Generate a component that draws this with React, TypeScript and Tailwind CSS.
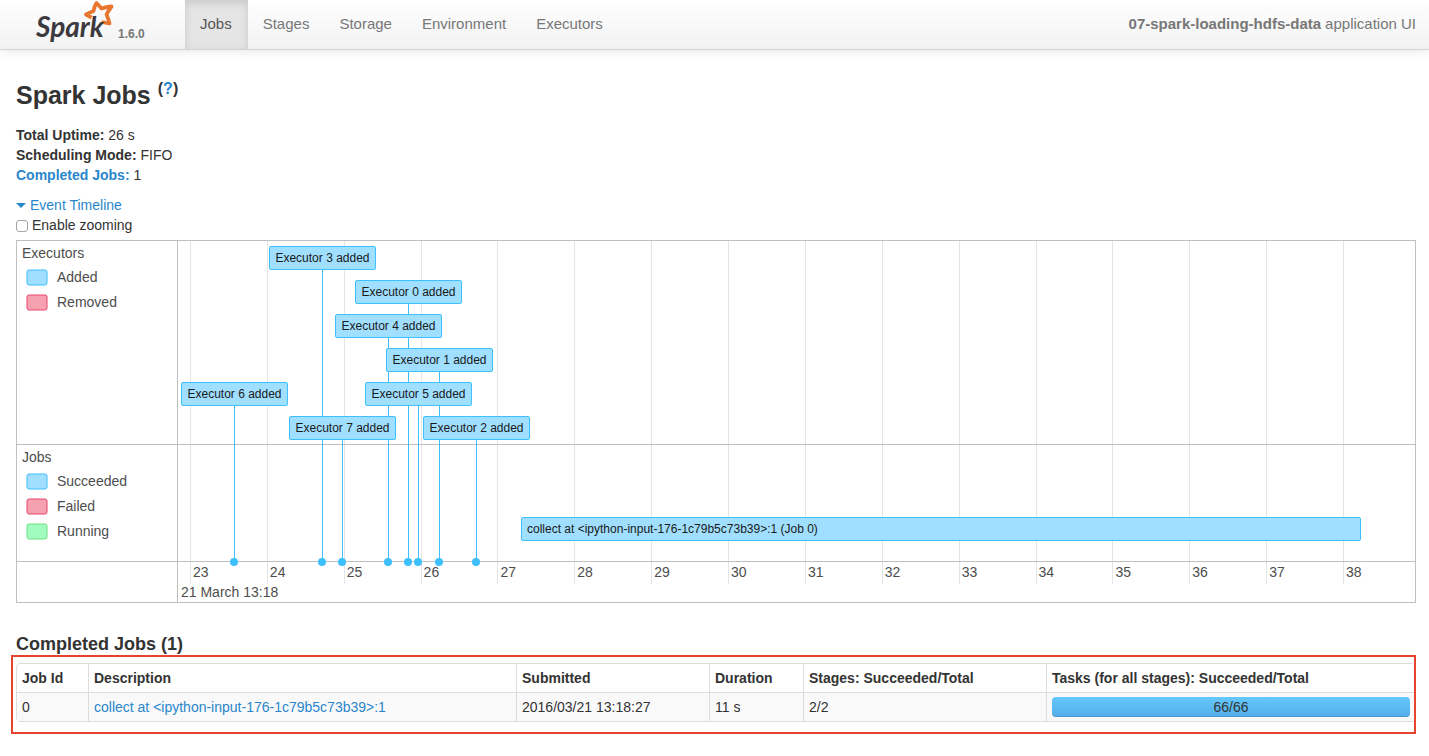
import React from 'react';

const TABS = ['Jobs', 'Stages', 'Storage', 'Environment', 'Executors'];

// Width of the plot that the pixel offsets below are measured on
const PLOT_WIDTH = 1237;
const FIRST_TICK = 12;
const TICKS = Array.from({ length: 16 }, (_, i) => ({
    label: 23 + i,
    offset: FIRST_TICK + (i * 1153) / 15,
}));

const EXECUTORS = [
    { id: 6, offset: 56, row: 4 },
    { id: 3, offset: 144, row: 0 },
    { id: 7, offset: 164, row: 5 },
    { id: 4, offset: 210, row: 2 },
    { id: 0, offset: 230, row: 1 },
    { id: 5, offset: 240, row: 4 },
    { id: 1, offset: 261, row: 3 },
    { id: 2, offset: 298, row: 5 },
];

const SUMMARY = [
    { label: 'Total Uptime:', value: '26 s' },
    { label: 'Scheduling Mode:', value: 'FIFO' },
    { label: 'Completed Jobs:', value: '1', link: true },
];

const BLUE = { fill: '#a0dfff', stroke: '#3ec0ff' };
const RED = { fill: '#f5a1b0', stroke: '#e9446f' };
const GREEN = { fill: '#a2fcc0', stroke: '#6de080' };

const percent = (px: number) => `${(px / PLOT_WIDTH) * 100}%`;
const rowTop = (row: number) => 5 + row * 34;

const Logo: React.FC = () => (
    <a href="#" className="relative flex h-[49px] w-[78px] shrink-0 items-center text-[#3c3a3e]" aria-label="Spark">
        <svg className="absolute top-0 left-[47px]" width="32" height="27" viewBox="0 0 32 27" fill="none">
            <path
                d="M8.5 17.5 L3 14.5 Q7 12.5 10.5 11 Q11.5 6 13.5 3 Q16 5.5 18.5 8.5 Q23 7 28.5 6.5 Q25.5 10.5 23.5 14.5 Q25.5 19 26.5 23.5 L18.5 22"
                stroke="#e8762d"
                strokeWidth="3.8"
                strokeLinejoin="round"
            />
        </svg>
        <span className="relative mt-0.5 font-['Lato',sans-serif] text-[28px] leading-8 font-bold italic">Spark</span>
    </a>
);

const Navbar: React.FC = () => (
    <nav className="flex h-[50px] items-stretch border-b border-[#d4d4d4] bg-linear-to-b from-white to-[#f2f2f2] pr-[13px] pl-9 text-[15px] leading-5 text-[#777] shadow-[0_1px_10px_rgba(0,0,0,0.1)]">
        <Logo />
        <span className="mt-6 ml-1 w-[67px] text-[12px] font-bold">1.6.0</span>
        <ul className="flex">
            {TABS.map((tab, i) => (
                <li key={tab} className="flex">
                    <a
                        href="#"
                        className={
                            i === 0
                                ? 'flex items-center bg-[#e5e5e5] pr-4 pb-0.5 pl-[15px] text-[#555] shadow-[inset_0_3px_8px_rgba(0,0,0,0.125)]'
                                : 'flex items-center px-[15px] pb-0.5'
                        }
                    >
                        {tab}
                    </a>
                </li>
            ))}
        </ul>
        <p className="ml-auto flex items-center gap-1 pb-0.5 whitespace-nowrap">
            <strong>07-spark-loading-hdfs-data</strong> application UI
        </p>
    </nav>
);

interface LegendProps {
    title: string;
    items: { label: string; color: { fill: string; stroke: string } }[];
}

const Legend: React.FC<LegendProps> = ({ title, items }) => (
    <div className="px-[5px] pt-0.5 text-[#4d4d4d]">
        <div className="mb-px">{title}</div>
        {items.map((item) => (
            <div key={item.label} className="flex h-[25px] items-center gap-[9px] pl-1">
                <svg className="mt-0.5" width="22" height="17">
                    <rect x="1" y="1" width="20" height="15" rx="2" fill={item.color.fill} stroke={item.color.stroke} />
                </svg>
                {item.label}
            </div>
        ))}
    </div>
);

const Timeline: React.FC = () => (
    <div className="mt-[5px] flex border border-[#bfbfbf]">
        <div className="w-[161px] shrink-0 border-r border-[#bfbfbf]">
            <div className="h-[204px] border-b border-[#bfbfbf]">
                <Legend
                    title="Executors"
                    items={[
                        { label: 'Added', color: BLUE },
                        { label: 'Removed', color: RED },
                    ]}
                />
            </div>
            <div className="h-[117px] border-b border-[#bfbfbf]">
                <Legend
                    title="Jobs"
                    items={[
                        { label: 'Succeeded', color: BLUE },
                        { label: 'Failed', color: RED },
                        { label: 'Running', color: GREEN },
                    ]}
                />
            </div>
        </div>

        <div className="relative h-[361px] min-w-0 flex-1 overflow-hidden text-[#4d4d4d]">
            {/* Axis */}
            {TICKS.map((tick) => (
                <div
                    key={tick.label}
                    className="absolute top-0 flex h-[343px] items-end border-l border-[#e5e5e5] pb-0.5 pl-0.5"
                    style={{ left: percent(tick.offset) }}
                >
                    {tick.label}
                </div>
            ))}
            <div className="absolute bottom-0 left-[3px]">21 March 13:18</div>
            <div className="absolute top-[203px] w-full border-t border-[#bfbfbf]" />
            <div className="absolute top-[320px] w-full border-t border-[#bfbfbf]" />

            {/* Executor events: lines and dots first, labels over them */}
            {EXECUTORS.map((executor) => (
                <div
                    key={executor.id}
                    className="absolute bottom-10 border-l border-[#3ec0ff]"
                    style={{ left: percent(executor.offset), top: rowTop(executor.row) }}
                >
                    <span className="absolute -bottom-1 -left-[5px] size-2 rounded-full bg-[#3ec0ff]" />
                </div>
            ))}
            {EXECUTORS.map((executor) => (
                <div
                    key={executor.id}
                    className="absolute -ml-[53px] h-6 w-[107px] rounded-xs border border-[#3ec0ff] bg-[#a0dfff] text-center text-[12px] leading-[22px] whitespace-nowrap text-[#1a1a1a]"
                    style={{ left: percent(executor.offset), top: rowTop(executor.row) }}
                >
                    Executor {executor.id} added
                </div>
            ))}

            {/* Jobs */}
            <div
                className="absolute top-[276px] h-6 overflow-hidden rounded-xs border border-[#3ec0ff] bg-[#a0dfff] px-[5px] text-[12px] leading-[22px] whitespace-nowrap text-[#1a1a1a]"
                style={{ left: percent(343), width: percent(840) }}
            >
                {'collect at <ipython-input-176-1c79b5c73b39>:1 (Job 0)'}
            </div>
        </div>
    </div>
);

const COLUMNS = [
    { title: 'Job Id', width: 'w-[71px]' },
    { title: 'Description', width: '' },
    { title: 'Submitted', width: 'w-[193px]' },
    { title: 'Duration', width: 'w-[94px]' },
    { title: 'Stages: Succeeded/Total', width: 'w-[243px]' },
    { title: 'Tasks (for all stages): Succeeded/Total', width: 'w-[369px]' },
];

const CELL = 'border-l border-[#ddd] px-[5px] py-1 first:border-l-0';

const JobsTable: React.FC = () => (
    <div className="relative mt-[9px]">
        <table className="w-full table-fixed border-separate border-spacing-0 rounded border border-[#ddd] text-left">
            <thead>
                <tr>
                    {COLUMNS.map((column) => (
                        <th key={column.title} className={`${CELL} ${column.width} whitespace-nowrap`}>
                            {column.title}
                        </th>
                    ))}
                </tr>
            </thead>
            <tbody className="[&_td]:border-t [&_td]:bg-[#f9f9f9]">
                <tr>
                    <td className={CELL}>0</td>
                    <td className={CELL}>
                        <a href="#" className="text-[#2a86cb]">
                            {'collect at <ipython-input-176-1c79b5c73b39>:1'}
                        </a>
                    </td>
                    <td className={CELL}>2016/03/21 13:18:27</td>
                    <td className={CELL}>11 s</td>
                    <td className={CELL}>2/2</td>
                    <td className={CELL}>
                        <div className="h-5 rounded bg-linear-to-b from-[#64c8fe] to-[#54aee9] text-center shadow-[inset_0_-1px_0_rgba(0,0,0,0.15)]">
                            66/66
                        </div>
                    </td>
                </tr>
            </tbody>
        </table>
        <div className="pointer-events-none absolute -top-2 right-0 -bottom-3 -left-[5px] border-2 border-[#e74430]" />
    </div>
);

const App: React.FC = () => {
    return (
        <div className="bg-white font-['Liberation_Sans',Arial,sans-serif] text-[14px] leading-5 text-[#333]">
            <Navbar />
            <main className="pt-[25px] pr-[13px] pb-5 pl-4">
                <h1 className="mb-2.5 flex h-10 items-center gap-[7px] text-[25px] font-bold">
                    Spark Jobs
                    <sup className="-top-1.5 text-[16px]">
                        (<a href="#" className="text-[#2a86cb]">?</a>)
                    </sup>
                </h1>

                <ul className="mb-2.5">
                    {SUMMARY.map((item) => (
                        <li key={item.label}>
                            {item.link ? (
                                <a href="#completed" className="font-bold text-[#2a86cb]">{item.label}</a>
                            ) : (
                                <strong>{item.label}</strong>
                            )}{' '}
                            {item.value}
                        </li>
                    ))}
                </ul>

                <button type="button" className="flex items-center gap-1 text-[#2a86cb]">
                    <svg width="10" height="5" viewBox="0 0 10 5" fill="currentColor">
                        <path d="M0 0h10L5 5z" />
                    </svg>
                    Event Timeline
                </button>
                <label className="flex items-center gap-1">
                    <input
                        type="checkbox"
                        className="mt-0.5 size-3 appearance-none rounded-[3px] border border-[#a6a6a6] bg-white checked:bg-[#2a86cb]"
                    />
                    Enable zooming
                </label>
                <Timeline />

                <h2 id="completed" className="mt-[31px] text-[18px] leading-5 font-bold">Completed Jobs (1)</h2>
                <JobsTable />
            </main>
        </div>
    );
};

export default App;
